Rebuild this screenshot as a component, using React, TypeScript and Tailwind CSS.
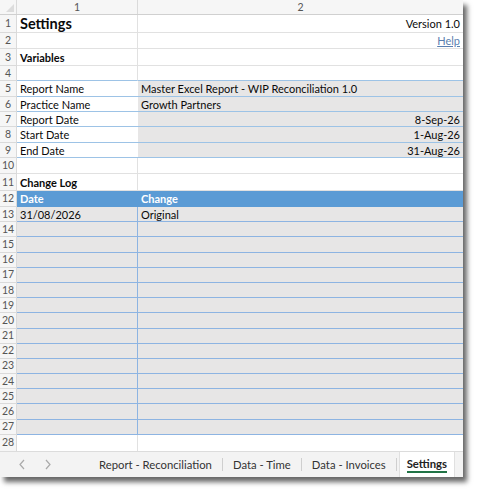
import React from 'react';

type Row = {
  n: number;
  h: string;
  kind: 'plain' | 'pre' | 'var' | 'head' | 'log' | 'last';
  c1?: React.ReactNode;
  c2?: React.ReactNode;
  right?: boolean;
};

const rows: Row[] = [
  { n: 1, h: 'h-[18px]', kind: 'plain', c1: <span className="text-[14.5px] font-bold">Settings</span>, c2: 'Version 1.0', right: true },
  { n: 2, h: 'h-[16px]', kind: 'plain', c2: <span className="text-[#5a7fb0] underline">Help</span>, right: true },
  { n: 3, h: 'h-[17px]', kind: 'plain', c1: <span className="font-bold">Variables</span> },
  { n: 4, h: 'h-[15px]', kind: 'pre' },
  { n: 5, h: 'h-[16px]', kind: 'var', c1: 'Report Name', c2: 'Master Excel Report - WIP Reconciliation 1.0' },
  { n: 6, h: 'h-[15px]', kind: 'var', c1: 'Practice Name', c2: 'Growth Partners' },
  { n: 7, h: 'h-[15px]', kind: 'var', c1: 'Report Date', c2: '8-Sep-26', right: true },
  { n: 8, h: 'h-[16px]', kind: 'var', c1: 'Start Date', c2: '1-Aug-26', right: true },
  { n: 9, h: 'h-[15px]', kind: 'var', c1: 'End Date', c2: '31-Aug-26', right: true },
  { n: 10, h: 'h-[16px]', kind: 'plain' },
  { n: 11, h: 'h-[17px]', kind: 'plain', c1: <span className="font-bold">Change Log</span> },
  { n: 12, h: 'h-[16px]', kind: 'head', c1: 'Date', c2: 'Change' },
  { n: 13, h: 'h-[15.2px]', kind: 'log', c1: '31/08/2026', c2: 'Original' },
  ...Array.from({ length: 14 }, (_, i) => ({ n: 14 + i, h: 'h-[15.2px]', kind: 'log' as const })),
  { n: 28, h: 'h-[17px]', kind: 'last' },
];

function cellClasses(kind: Row['kind'], col: 1 | 2) {
  switch (kind) {
    case 'pre':
      return col === 1
        ? 'bg-white border-b border-r border-b-[#9dc3e6] border-r-[#e1e1e1]'
        : 'bg-white border-b border-[#9dc3e6]';
    case 'var':
      return col === 1
        ? 'bg-white border-b border-[#9dc3e6]'
        : 'bg-[#e7e6e6] border-b border-[#9dc3e6]';
    case 'head':
      return 'bg-[#5b9bd5] text-white font-bold border-b border-[#5b9bd5]';
    case 'log':
      return col === 1
        ? 'bg-[#e7e6e6] border-b border-r border-[#8db4e2]'
        : 'bg-[#e7e6e6] border-b border-[#8db4e2]';
    case 'last':
      return col === 1 ? 'bg-white border-r border-[#e1e1e1]' : 'bg-white';
    default:
      return col === 1
        ? 'bg-white border-b border-r border-[#e1e1e1]'
        : 'bg-white border-b border-[#e1e1e1]';
  }
}

function SheetRow({ row }: { row: Row }) {
  return (
    <div className={`grid grid-cols-[17px_121px_1fr] grid-rows-[minmax(0,1fr)] ${row.h}`}>
      <div className="flex items-center justify-center bg-[#f6f6f6] border-r border-b border-[#dadada] text-[10.5px] text-[#555]">
        {row.n}
      </div>
      <div className={`flex items-center px-[3px] overflow-hidden whitespace-nowrap ${cellClasses(row.kind, 1)}`}>
        {row.c1}
      </div>
      <div
        className={`flex items-center px-[3px] overflow-hidden whitespace-nowrap ${row.right ? 'justify-end' : ''} ${cellClasses(row.kind, 2)}`}
      >
        {row.c2}
      </div>
    </div>
  );
}

function Chevron({ left }: { left?: boolean }) {
  return (
    <svg width="8" height="11" viewBox="0 0 8 11" fill="none" stroke="#a9a9a9" strokeWidth="1.2">
      <path d={left ? 'M6 1 L2 5.5 L6 10' : 'M2 1 L6 5.5 L2 10'} />
    </svg>
  );
}

function TabBar() {
  const tabs = ['Report - Reconciliation', 'Data - Time', 'Data - Invoices'];
  return (
    <div className="flex items-center h-[26px] bg-[#f3f3f3] border-t border-[#dcdcdc] text-[11.3px] text-[#333]">
      <div className="flex shrink-0 items-center w-[89px] pl-[18px] gap-[18px]">
        <Chevron left />
        <Chevron />
      </div>
      {tabs.map((t) => (
        <React.Fragment key={t}>
          <span className="shrink-0 px-[10px] whitespace-nowrap">{t}</span>
          <span className="shrink-0 w-px h-[13px] bg-[#cfcfcf]" />
        </React.Fragment>
      ))}
      <div className="shrink-0 ml-[2px] flex h-full items-center bg-white px-[7px] border-x border-[#e0e0e0]">
        <span className="font-bold text-[#222] border-b-2 border-[#217346] leading-[14px]">Settings</span>
      </div>
    </div>
  );
}

export default function App() {
  return (
    <div className="w-[480px] h-[492px] bg-white" style={{ fontFamily: 'Lato, "Open Sans", sans-serif' }}>
      <div className="w-[463px] h-[477px] flex flex-col bg-white shadow-[4px_5px_5px_rgba(0,0,0,0.6)] overflow-hidden text-[11px] leading-[13px] text-[#0a0a0a]">
        <div className="grid grid-cols-[17px_121px_1fr] grid-rows-[minmax(0,1fr)] shrink-0 h-[15px] bg-[#f6f6f6] border-b border-[#d0d0d0] text-[10.5px] text-[#555]">
          <div className="relative border-r border-[#dadada]">
            <svg className="absolute right-[2px] bottom-[2px]" width="8" height="8" viewBox="0 0 8 8">
              <path d="M8 0 L8 8 L0 8 Z" fill="#dcdcdc" />
            </svg>
          </div>
          <div className="flex items-center justify-center border-r border-[#dadada]">1</div>
          <div className="flex items-center justify-center">2</div>
        </div>
        <div className="flex-1 min-h-0 overflow-hidden">
          {rows.map((r) => (
            <SheetRow key={r.n} row={r} />
          ))}
        </div>
        <TabBar />
      </div>
    </div>
  );
}
